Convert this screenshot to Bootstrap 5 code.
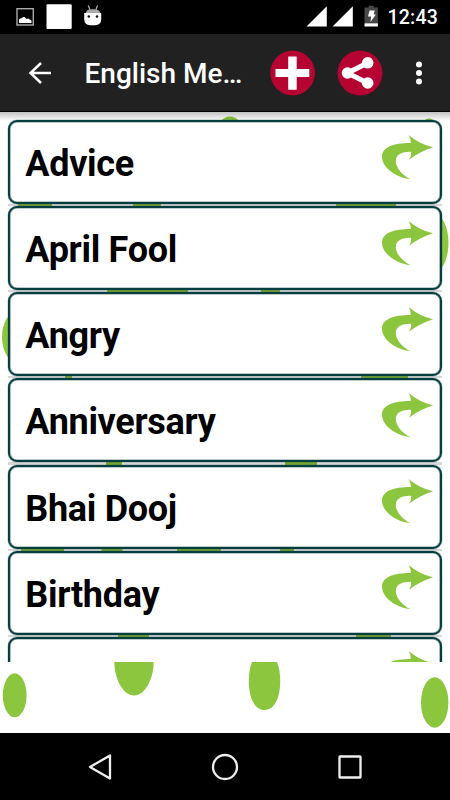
<!DOCTYPE html>
<html lang="en">
<head>
<meta charset="utf-8">
<meta name="viewport" content="width=device-width, initial-scale=1">
<title>English Messages</title>
<link href="https://cdn.jsdelivr.net/npm/bootstrap@5.3.0/dist/css/bootstrap.min.css" rel="stylesheet">
<style>
body{font-family:Roboto,"Liberation Sans",sans-serif;width:450px;height:800px}
svg{display:block;flex:none}
.status-bar{height:34px;padding:0 12px 0 16px}
.clock{font-size:19.5px;font-weight:500;line-height:34px;letter-spacing:.2px;margin-left:9px;padding-top:1px}
.app-bar{height:78px;background:#212121;border-bottom:1px solid #000;padding:0 23px 0 28px}
.app-title{font-size:28px;font-weight:500;line-height:34px;width:160px;margin-left:32.500px;padding-top:2px}
.content-area{height:621px;background:#fff}
.dots{z-index:0}
.bar-shadow{height:9px;background:linear-gradient(rgba(0,0,0,.24),rgba(0,0,0,0));z-index:1}
.topics{height:550px;padding:8px 8px 0;z-index:2}
.topic{height:84px;background:#fff;border:2px solid #073f40;border-radius:9px;padding:0 7px 0 16px;box-shadow:inset 0 0 0 .6px rgba(7,63,64,.55),0 0 0 .5px rgba(7,63,64,.3)}
.topic-name{font-size:36px;font-weight:700;color:#000;line-height:42px;padding-top:21px;letter-spacing:-.3px;margin-left:-.7px}
.topic svg{margin-top:12.5px}
.gap-line{height:2.17px;background:rgba(0,0,0,.16);margin:0}
.nav-keys{height:67px;padding:0 87px 0 88px}
</style>
<script src="https://cdn.jsdelivr.net/npm/bootstrap@5.3.0/dist/js/bootstrap.bundle.min.js"></script>
</head>
<body class="m-0 overflow-hidden bg-black">
<svg class="d-none"><defs>
<path id="arrow" d="M27.700 0Q38 9 52 12.300Q38 17 28 24.800Q31 20 29.800 16.800C19 16.500 14.500 21 14.800 26.500C15.200 33 21.500 40.500 29.500 44.300C15 42.500 1.300 33 1 22C.8 12 13 8 29.800 8.100Q30 4 27.700 0Z" fill="#8cc63f"/>
</defs></svg>
<header>
<div class="status-bar bg-black text-white d-flex align-items-center">
<svg width="88" height="34" viewBox="16 0 88 34"><rect x="17" y="8.700" width="16.300" height="16.300" fill="none" stroke="#aaa" stroke-width="1.400"/><path d="M19 23v-3.500q1-1.500 3-1.500 1-1.500 2.500-1 1 1 2 2 2-1 3 .5 2 0 2 1.500v2z" fill="#fff"/><rect x="46.500" y="4.300" width="25.200" height="24.700" rx="1" fill="#fff"/><path d="M84.200 13h17v6q0 6-6 6.300h-5q-6-.3-6-6.300z" fill="#fff"/><path d="M85.500 13q1-3 4-3.700h6.500q3.500.7 4.500 3.700z" fill="#aaa"/><path d="M88.300 5.500l1.500 4M97.500 5.500l-1.500 4" stroke="#aaa" stroke-width="1.300"/><circle cx="88.800" cy="16.500" r="1.300" fill="#111"/><circle cx="97" cy="16.500" r="1.300" fill="#111"/></svg>
<svg class="ms-auto" width="74" height="34" viewBox="305 0 74 34"><path d="M306.500 26.500h20.300V6.300zM332.500 26.500h20.300V6.300z" fill="#fff"/><path d="M364.500 7.500h4.200V5.700h5v1.800h4.200v16h-13.400z" fill="#484848"/><path d="M364.500 23.300h13.400v3.200h-13.400z" fill="#fff"/><path d="M369.500 10.500h5.200l-1 4h2.200l-5.500 7.500 .8-5.500h-3.200z" fill="#fff"/></svg>
<span class="clock">12:43</span>
</div>
<nav class="app-bar d-flex align-items-center text-white">
<svg width="24" height="24" viewBox="0 0 24 24"><path d="M23 12H2.500M13 2L2.500 12 13 22" fill="none" stroke="#fff" stroke-width="2.500"/></svg>
<div class="app-title text-nowrap">English Me…</div>
<svg class="ms-auto" width="158" height="46" viewBox="269 50 158 46"><circle cx="292.600" cy="73" r="22.400" fill="#b50332"/><path d="M288.200 56.500h8.500v12.400h12.600v8.100h-12.600v12.800h-8.500V77h-12.700v-8.100h12.700z" fill="#fff"/><circle cx="360" cy="73" r="22.500" fill="#b50332"/><path d="M367.500 63L347.500 73l20 10" fill="none" stroke="#fff" stroke-width="5"/><g fill="#fff"><circle cx="367.700" cy="62.800" r="5.800"/><circle cx="347.500" cy="73" r="5.800"/><circle cx="367.700" cy="83" r="5.800"/><circle cx="419" cy="64.500" r="3"/><circle cx="419" cy="73" r="3"/><circle cx="419" cy="81.500" r="3"/></g></svg>
</nav>
</header>
<main class="content-area position-relative">
<svg class="dots position-absolute top-0 start-0" width="450" height="621" viewBox="0 112 450 621" fill="#8cc63f"><ellipse cx="230" cy="132" rx="13" ry="15.500"/><ellipse cx="429" cy="134" rx="10" ry="15.500"/><ellipse cx="35" cy="205" rx="17" ry="27"/><ellipse cx="147" cy="205" rx="14" ry="20"/><ellipse cx="366" cy="205" rx="30" ry="40"/><ellipse cx="433" cy="243" rx="15.500" ry="30"/><ellipse cx="147.500" cy="291" rx="40.500" ry="40"/><ellipse cx="270.500" cy="291" rx="9.500" ry="20"/><ellipse cx="18" cy="337" rx="16" ry="26"/><ellipse cx="68.500" cy="377" rx="3.500" ry="10"/><ellipse cx="384.500" cy="377" rx="23.500" ry="30"/><ellipse cx="114" cy="463" rx="8" ry="20"/><ellipse cx="301" cy="463" rx="16" ry="30"/><ellipse cx="42.500" cy="550" rx="21.500" ry="30"/><ellipse cx="112" cy="550" rx="10.500" ry="20"/><ellipse cx="199" cy="550" rx="22" ry="30"/><ellipse cx="287" cy="550" rx="7" ry="15"/><ellipse cx="133.500" cy="636" rx="15.500" ry="12"/><ellipse cx="373.500" cy="636" rx="17.500" ry="20"/><path d="M114.300 662h39.400C153.500 679 145 695.500 134 695.500S114.500 679 114.300 662z"/><path d="M252 662h25c6 14 4.500 48-12.500 48S246 676 252 662z"/><ellipse cx="14.700" cy="695.300" rx="11.900" ry="22"/><ellipse cx="434.700" cy="702.500" rx="13.700" ry="25.200"/></svg>
<div class="bar-shadow position-absolute top-0 start-0 w-100"></div>
<section class="topics position-relative overflow-hidden">
<div class="topic d-flex justify-content-between align-items-start"><div class="topic-name">Advice</div><svg width="52" height="45"><use href="#arrow"/></svg></div><div class="gap-line"></div>
<div class="topic d-flex justify-content-between align-items-start"><div class="topic-name">April Fool</div><svg width="52" height="45"><use href="#arrow"/></svg></div><div class="gap-line"></div>
<div class="topic d-flex justify-content-between align-items-start"><div class="topic-name">Angry</div><svg width="52" height="45"><use href="#arrow"/></svg></div><div class="gap-line"></div>
<div class="topic d-flex justify-content-between align-items-start"><div class="topic-name">Anniversary</div><svg width="52" height="45"><use href="#arrow"/></svg></div><div class="gap-line"></div>
<div class="topic d-flex justify-content-between align-items-start"><div class="topic-name">Bhai Dooj</div><svg width="52" height="45"><use href="#arrow"/></svg></div><div class="gap-line"></div>
<div class="topic d-flex justify-content-between align-items-start"><div class="topic-name">Birthday</div><svg width="52" height="45"><use href="#arrow"/></svg></div><div class="gap-line"></div>
<div class="topic d-flex justify-content-between align-items-start"><svg class="ms-auto" width="52" height="45"><use href="#arrow"/></svg></div>
</section>
</main>
<footer class="nav-keys bg-black d-flex align-items-center justify-content-between">
<svg width="24" height="28" viewBox="0 0 24 28"><path d="M22 2.500v23L2 14z" fill="none" stroke="#eee" stroke-width="2.300" stroke-linejoin="round"/></svg>
<svg width="28" height="28" viewBox="0 0 28 28"><circle cx="14" cy="14" r="12" fill="none" stroke="#eee" stroke-width="2.300"/></svg>
<svg width="26" height="28" viewBox="0 0 26 28"><rect x="2.500" y="3.500" width="21" height="21" rx=".5" fill="none" stroke="#eee" stroke-width="2.300"/></svg>
</footer>
</body>
</html>
